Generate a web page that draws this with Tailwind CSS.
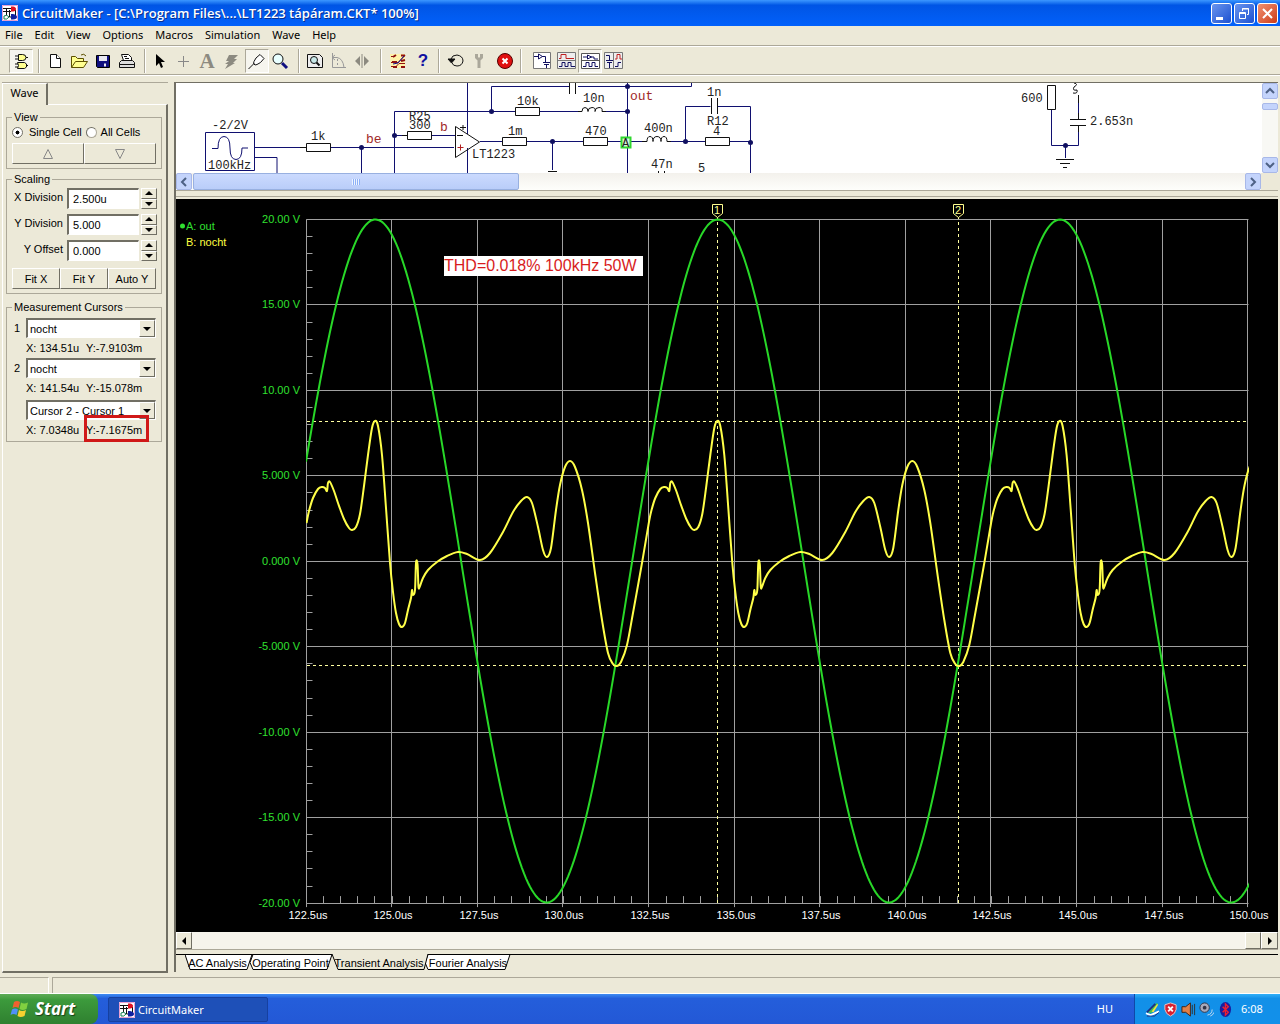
<!DOCTYPE html>
<html lang="hu">
<head>
<meta charset="utf-8">
<title>CircuitMaker</title>
<script src="https://cdn.jsdelivr.net/npm/@tailwindcss/browser@4"></script>
</head>
<body class="flex h-screen flex-col overflow-hidden bg-[#ece9d8] font-['Liberation_Sans',sans-serif] text-[11px] leading-[14px] text-black">
<svg class="hidden">
  <symbol id="logo" viewBox="0 0 16 16">
    <path d="M0 0h16v16H0z" fill="#fff"/><path d="M.5.5h15v15H.5z" fill="none" stroke="#e8a0d0"/>
    <path d="M1 3.500h9M4.500 3v8M1 6.500h8M7.500 5v7h5M13.500 5v6" fill="none" stroke="#111"/>
    <path d="M9 1.500h2q3 .5 3 2.500t-3 2.500H9z" fill="#e01020"/><path d="M9 9h2q4 1 4 3t-4 2.500H9z" fill="#1020a0"/><path d="M2 11q3-2 5 1-2 3-5 2z" fill="#fff" stroke="#108050"/>
  </symbol>
</svg>

<header class="flex h-[26px] shrink-0 items-center bg-linear-to-b from-[#3c97ff] via-[#0055e5] via-20% to-[#0261fb] pl-[2px] pr-[2px] text-white">
  <svg class="size-4"><use href="#logo"/></svg>
  <h1 class="ml-1 grow whitespace-nowrap font-['Open_Sans',sans-serif] text-[13px] font-semibold leading-[18px] text-shadow-[1px_1px_0_#0a3090]">CircuitMaker - [C:\Program Files\...\LT1223 tápáram.CKT* 100%]</h1>
  <div class="flex gap-[2px]">
    <button aria-label="Minimize" class="size-[21px] rounded-[3px] border border-white bg-linear-to-br from-[#6a94ee] to-[#1c4fd0]"><svg viewBox="0 0 19 19"><path d="M4 13h7v3H4z" fill="#fff"/></svg></button>
    <button aria-label="Restore" class="size-[21px] rounded-[3px] border border-white bg-linear-to-br from-[#6a94ee] to-[#1c4fd0]"><svg viewBox="0 0 19 19" fill="none" stroke="#fff"><path d="M7.500 7V4.500h6v6H12M7 5h7"/><path d="M4.500 8.500h6v6h-6zM4 9.500h7"/></svg></button>
    <button aria-label="Close" class="size-[21px] rounded-[3px] border border-white bg-linear-to-br from-[#f09070] to-[#cc3810]"><svg viewBox="0 0 19 19"><path d="M5 5l9 9M14 5l-9 9" stroke="#fff" stroke-width="2"/></svg></button>
  </div>
</header>

<nav class="flex h-[20px] shrink-0 items-center gap-3 border-b border-[#aca899] pb-[2px] pl-[5px] font-['Noto_Sans',sans-serif] text-[11px]">
  <button>File</button><button>Edit</button><button>View</button><button>Options</button><button>Macros</button><button>Simulation</button><button>Wave</button><button>Help</button>
</nav>

<div class="flex h-[29px] shrink-0 items-center border-t border-b border-t-white border-b-[#aca899] pl-[9px]">
  <button aria-label="Parts" class="size-6 border border-[#aca899] border-r-white border-b-white bg-[#f6f5ee]"><svg viewBox="0 0 22 22" fill="#ffff90" stroke="#111"><path d="M8.500 4.500h4q3.500 0 3.500 3t-3.500 3h-4zM7.500 12.500h7l2 1.500v3l-2 1.500h-7q2-3 0-6z"/><path d="M5 6h3M5 9h3M16 7.500h2M5 14h3M5 17h3M16 15.500h2"/></svg></button>
  <i class="mr-[3px] ml-[5px] h-6 w-[2px] border-l border-[#aca899] bg-white"></i>
  <button aria-label="New" class="size-6"><svg viewBox="0 0 24 24" fill="#fff" stroke="#111"><path d="M7.500 5.500h6l4 4v9h-10z"/><path d="M13.500 5.500v4h4"/></svg></button>
  <button aria-label="Open" class="size-6"><svg viewBox="0 0 24 24" fill="#ffff90" stroke="#5c5000"><path d="M4.500 18.500v-11h4l2 2h6v3"/><path d="M4.500 18.500l4-6h12l-4 6z"/><path d="M14 6q3-2 5 1" fill="none"/></svg></button>
  <button aria-label="Save" class="size-6"><svg viewBox="0 0 24 24"><path d="M5.500 6.500h13v12h-12l-1-1z" fill="#101080" stroke="#000"/><path d="M8 7h8v5H8zM13 14.500h2v3h-2z" fill="#e8e8f0"/></svg></button>
  <button aria-label="Print" class="size-6"><svg viewBox="0 0 24 24" fill="#ddd" stroke="#111"><path d="M8.500 11.500l-2-6h7l3 3v3z" fill="#fff"/><path d="M9 7.500h3M10 9.500h4M4.500 13.500l2-2h11l2 2v5h-15zM4 15.500h15"/></svg></button>
  <i class="mr-[3px] ml-[5px] h-6 w-[2px] border-l border-[#aca899] bg-white"></i>
  <button aria-label="Select" class="size-6"><svg viewBox="0 0 24 24"><path d="M7 5v12l3-3 2 5 2-1-2-5h4z"/></svg></button>
  <button aria-label="Wire" class="size-6"><svg viewBox="0 0 24 24"><path d="M5 12.500h11M10.500 7v11" stroke="#888"/></svg></button>
  <button aria-label="Text" class="size-6 pr-1 font-['Liberation_Serif',serif] text-[21px] font-bold leading-6 text-[#8c8a80]">A</button>
  <button aria-label="Delete" class="size-6"><svg viewBox="0 0 24 24"><path d="M8 6h9l-4 4h3l-4 4h2L4 20l3-5H4l4-3H5z" fill="#8c8a80"/></svg></button>
  <button aria-label="Probe" class="size-6 border border-[#aca899] border-r-white border-b-white bg-[#f6f5ee]"><svg viewBox="0 0 22 22" fill="#fff" stroke="#111"><path d="M2.500 19l6-6M8 11.500l2-3.500 4-3.500 4 4-3.500 4-3.500 2-2 .5-1.500-1.500z"/></svg></button>
  <button aria-label="Zoom" class="size-6"><svg viewBox="0 0 24 24"><circle cx="9" cy="10" r="5" fill="#e8ffff" stroke="#111"/><path d="M13 14l5 5" stroke="#101080" stroke-width="3"/></svg></button>
  <i class="mr-[3px] ml-[5px] h-6 w-[2px] border-l border-[#aca899] bg-white"></i>
  <button aria-label="Fit page" class="size-6"><svg viewBox="0 0 24 24" fill="none" stroke="#111"><path d="M4.500 5.500h12l3 3v10h-15z" fill="#eee"/><circle cx="11" cy="11" r="3.500" fill="#c8e8e8"/><path d="M13.500 13.500l3 3" stroke-width="2"/></svg></button>
  <button aria-label="Rotate" class="size-6"><svg viewBox="0 0 24 24" fill="none" stroke="#999"><path d="M5.500 4v14.500H19M5 8.500h5q6 1 7 10M8 6l-3 2.500 3 2.500"/><path d="M10.500 10v8" stroke-dasharray="2 2"/></svg></button>
  <button aria-label="Mirror" class="size-6"><svg viewBox="0 0 24 24"><path d="M9 7v10l-5-5zM13 7v10l5-5z" fill="#8c8a80"/><path d="M11 5v14" stroke="#8c8a80"/></svg></button>
  <i class="mr-[3px] ml-[5px] h-6 w-[2px] border-l border-[#aca899] bg-white"></i>
  <button aria-label="Digital options" class="size-6"><svg viewBox="0 0 24 24" fill="none"><path d="M5 5h15v14H6z" fill="#fff2a8"/><path d="M8 8l3-2M7 13h5M8 18h4M16 6.500h4M16 12l4-1M16 18h4" stroke="#901010" stroke-width="2"/><path d="M6 7.500h4M6 13.500h7l7-7M6 17.500h5l3-3h6" stroke="#901010"/><path d="M8 15l5-1 6-7" stroke="#101090"/></svg></button>
  <button aria-label="Help" class="size-6 pl-1 text-[17px] font-bold leading-6 text-[#1010a0]">?</button>
  <i class="mr-[3px] ml-[5px] h-6 w-[2px] border-l border-[#aca899] bg-white"></i>
  <button aria-label="Reset" class="size-6"><svg viewBox="0 0 24 24" fill="none" stroke="#111"><path d="M8 10q1-4 6-4 6 1 6 6-1 5-6 5-4 0-5-3"/><path d="M5 10h7l-3.500 4z" fill="#111"/></svg></button>
  <button aria-label="Step" class="size-6"><svg viewBox="0 0 24 24"><path d="M9.500 5v3.500l2.500 2.500 2.500-2.500V5M12 11v8" fill="none" stroke="#aaa79a" stroke-width="3"/></svg></button>
  <button aria-label="Stop" class="size-6"><svg viewBox="0 0 24 24"><circle cx="14" cy="12" r="7.500" fill="#e01010" stroke="#500"/><path d="M11.500 9.500l5 5M16.500 9.500l-5 5" stroke="#fff" stroke-width="2"/></svg></button>
  <i class="mr-2 ml-[5px] h-6 w-[2px] border-l border-[#aca899] bg-white"></i>
  <button aria-label="Schematic" class="size-6"><svg viewBox="0 0 24 24" fill="none" stroke="#111060"><path d="M3.500 3.500h17v16h-17z" fill="#fff" stroke="#777"/><path d="M4 7.500h4M8.500 5v5l4-2.500zM12 7.500h3.500V13M13 13.500h7M14 15.500h5M16.500 16v3"/></svg></button>
  <button aria-label="Waveforms" class="size-6"><svg viewBox="0 0 24 24" fill="none" stroke="#111060"><path d="M3.500 3.500h18v16h-18zM4 11.500h17" fill="#eee" stroke="#777"/><path d="M5 9.500h2v-4h5v4h8" stroke="#c02020"/><path d="M5 17.500h3v-4h3v4h3v-4h3v4h4"/></svg></button>
  <button aria-label="Split horizontally" class="size-6 border border-[#aca899] border-r-white border-b-white bg-[#f6f5ee]"><svg viewBox="0 0 22 22" fill="none" stroke="#111060"><path d="M2.500 3.500h18v15h-18zM3 10.500h17" fill="#fff" stroke="#555"/><path d="M4 7h4M8.500 5v4l4-2zM12 7h3v2h4M4 16.500h3v-4h3v4h3v-4h3v4h3"/></svg></button>
  <button aria-label="Split vertically" class="size-6"><svg viewBox="0 0 24 24" fill="none" stroke="#111060"><path d="M2.500 3.500h18v16h-18zM11.500 4v15" fill="#eee" stroke="#777"/><path d="M4 6.500h3.500V11M4 11.500h7M5 13.500h5M7.500 14v5M13 17.500h3v-4h3"/><path d="M13 10h2V5.500h3V10h2" stroke="#c02020"/></svg></button>
</div>

<main class="flex min-h-0 grow border-t border-white">
  <aside class="flex w-[168px] shrink-0 flex-col pt-[6px] pl-[2px]">
    <div class="flex h-[22px] border-t border-[#aca899]">
      <button class="relative z-10 -mb-px w-[46px] border-l border-t border-r-2 border-l-white border-t-white border-r-[#716f64] bg-[#ece9d8] pb-1 font-['Noto_Sans',sans-serif] text-[11px]">Wave</button>
    </div>
    <div class="mb-1 grow border-t border-r-2 border-b-2 border-l border-[#716f64] border-t-white border-l-white pt-[5px] pr-[4px] pl-[3px]">
      <fieldset class="min-w-0 border border-[#aca899] px-[5px] pb-[4px]">
        <legend class="h-[14px] px-[2px]">View</legend>
        <div class="flex h-4 items-center">
          <input id="single" name="cells" type="radio" checked class="size-[11px] shrink-0 appearance-none rounded-full border border-[#716f64] bg-white bg-radial from-black from-25% to-white to-35%">
          <label for="single" class="ml-[6px] whitespace-nowrap">Single Cell</label>
          <input id="all" name="cells" type="radio" class="ml-1 size-[11px] shrink-0 appearance-none rounded-full border border-[#aca899] border-t-[#716f64] border-l-[#716f64] bg-white">
          <label for="all" class="ml-1 whitespace-nowrap">All Cells</label>
        </div>
        <div class="mt-[3px] grid h-[21px] grid-cols-2">
          <button aria-label="Up" class="flex items-center justify-center border border-r-[#716f64] border-b-[#716f64] border-white"><svg class="size-3" viewBox="0 0 12 12"><path d="M6 1.500L10.500 10.500h-9z" fill="none" stroke="#888"/></svg></button>
          <button aria-label="Down" class="flex items-center justify-center border border-r-[#716f64] border-b-[#716f64] border-white"><svg class="size-3" viewBox="0 0 12 12"><path d="M6 10.500L10.500 1.500h-9z" fill="none" stroke="#888"/></svg></button>
        </div>
      </fieldset>
      <fieldset class="mt-[3px] min-w-0 border border-[#aca899] px-[5px] pt-[2px] pb-[4px]">
        <legend class="h-[14px] px-[2px]">Scaling</legend>
        <div class="grid gap-[5px]">
          <div class="flex h-[21px]"><label for="xd" class="w-[51px] whitespace-nowrap pt-[2px] text-right">X Division</label><input id="xd" value="2.500u" class="ml-1 w-[72px] border border-t-2 border-l-2 border-white border-t-[#716f64] border-l-[#716f64] bg-white pl-1"><span class="ml-[2px] grid w-[16px] grid-rows-2"><button aria-label="Increase" class="flex items-center justify-center border border-white border-r-[#716f64] border-b-[#716f64]"><svg class="h-1 w-2" viewBox="0 0 8 4"><path d="M0 4l4-4 4 4z"/></svg></button><button aria-label="Decrease" class="flex items-center justify-center border border-white border-r-[#716f64] border-b-[#716f64]"><svg class="h-1 w-2" viewBox="0 0 8 4"><path d="M0 0l4 4 4-4z"/></svg></button></span></div>
          <div class="flex h-[21px]"><label for="yd" class="w-[51px] whitespace-nowrap pt-[2px] text-right">Y Division</label><input id="yd" value="5.000" class="ml-1 w-[72px] border border-t-2 border-l-2 border-white border-t-[#716f64] border-l-[#716f64] bg-white pl-1"><span class="ml-[2px] grid w-[16px] grid-rows-2"><button aria-label="Increase" class="flex items-center justify-center border border-white border-r-[#716f64] border-b-[#716f64]"><svg class="h-1 w-2" viewBox="0 0 8 4"><path d="M0 4l4-4 4 4z"/></svg></button><button aria-label="Decrease" class="flex items-center justify-center border border-white border-r-[#716f64] border-b-[#716f64]"><svg class="h-1 w-2" viewBox="0 0 8 4"><path d="M0 0l4 4 4-4z"/></svg></button></span></div>
          <div class="flex h-[21px]"><label for="yo" class="w-[51px] whitespace-nowrap pt-[2px] text-right">Y Offset</label><input id="yo" value="0.000" class="ml-1 w-[72px] border border-t-2 border-l-2 border-white border-t-[#716f64] border-l-[#716f64] bg-white pl-1"><span class="ml-[2px] grid w-[16px] grid-rows-2"><button aria-label="Increase" class="flex items-center justify-center border border-white border-r-[#716f64] border-b-[#716f64]"><svg class="h-1 w-2" viewBox="0 0 8 4"><path d="M0 4l4-4 4 4z"/></svg></button><button aria-label="Decrease" class="flex items-center justify-center border border-white border-r-[#716f64] border-b-[#716f64]"><svg class="h-1 w-2" viewBox="0 0 8 4"><path d="M0 0l4 4 4-4z"/></svg></button></span></div>
        </div>
        <div class="mt-[7px] grid h-[21px] grid-cols-3">
          <button class="border border-white border-r-[#716f64] border-b-[#716f64]">Fit X</button><button class="border border-white border-r-[#716f64] border-b-[#716f64]">Fit Y</button><button class="border border-white border-r-[#716f64] border-b-[#716f64]">Auto Y</button>
        </div>
      </fieldset>
      <fieldset class="mt-[6px] min-w-0 border border-[#aca899] px-[5px] pt-1 pb-[4px]">
        <legend class="h-[14px] px-[2px]">Measurement Cursors</legend>
        <div class="flex h-5"><label for="c1" class="w-[14px] pt-[3px] pl-[2px]">1</label><div class="relative grow"><select id="c1" class="h-5 w-full appearance-none border border-t-2 border-l-2 border-white border-t-[#716f64] border-l-[#716f64] bg-white pl-[2px]"><option>nocht</option></select><span class="pointer-events-none absolute top-[2px] right-px flex h-[17px] w-[16px] items-center justify-center border border-white border-r-[#716f64] border-b-[#716f64] bg-[#ece9d8]"><svg class="h-1 w-2" viewBox="0 0 8 4"><path d="M0 0l4 4 4-4z"/></svg></span></div></div>
        <p class="mt-[3px] flex h-[14px] pl-[14px] whitespace-nowrap"><span class="w-[60px]">X: 134.51u</span><span>Y:-7.9103m</span></p>
        <div class="mt-[3px] flex h-5"><label for="c2" class="w-[14px] pt-[3px] pl-[2px]">2</label><div class="relative grow"><select id="c2" class="h-5 w-full appearance-none border border-t-2 border-l-2 border-white border-t-[#716f64] border-l-[#716f64] bg-white pl-[2px]"><option>nocht</option></select><span class="pointer-events-none absolute top-[2px] right-px flex h-[17px] w-[16px] items-center justify-center border border-white border-r-[#716f64] border-b-[#716f64] bg-[#ece9d8]"><svg class="h-1 w-2" viewBox="0 0 8 4"><path d="M0 0l4 4 4-4z"/></svg></span></div></div>
        <p class="mt-[3px] flex h-[14px] pl-[14px] whitespace-nowrap"><span class="w-[60px]">X: 141.54u</span><span>Y:-15.078m</span></p>
        <div class="mt-[5px] flex h-5 pl-[14px]"><div class="relative grow"><select aria-label="Difference" class="h-5 w-full appearance-none border border-t-2 border-l-2 border-white border-t-[#716f64] border-l-[#716f64] bg-white pl-[2px]"><option>Cursor 2 - Cursor 1</option></select><span class="pointer-events-none absolute top-[2px] right-px flex h-[17px] w-[16px] items-center justify-center border border-white border-r-[#716f64] border-b-[#716f64] bg-[#ece9d8]"><svg class="h-1 w-2" viewBox="0 0 8 4"><path d="M0 0l4 4 4-4z"/></svg></span></div></div>
        <p class="mt-[3px] flex h-[14px] pl-[14px] whitespace-nowrap"><span class="w-[60px]">X: 7.0348u</span><span class="relative">Y:-7.1675m<i class="absolute -top-[8px] -right-[7px] -bottom-[5px] -left-[2px] border-3 border-[#d01818]"></i></span></p>
      </fieldset>
    </div>
  </aside>

  <section class="mt-[6px] mr-[2px] mb-[5px] ml-[6px] flex min-w-0 grow flex-col border-t border-l-2 border-[#716f64]">
    <div class="flex h-[90px] shrink-0 bg-white">
      <svg class="h-full min-w-0 grow font-['Liberation_Mono',monospace] text-[12px]" viewBox="176 83 1086 90" preserveAspectRatio="xMinYMin slice" fill="none" stroke="#101070">
        <path d="M254 147.500h54M330 147.500h124M254 157.500h23V173M361.500 147v26M394.500 173v-61.500h121M394.500 135.500h14M431 135.500h24M467.500 83v51M467.500 148v25M491.500 111V86.500h78M578 86.500h113.500V83M539 111.500h43M606 111.500h22M627.500 83v90M480 141.500h22M525 141.500h58M607 141.500h37M552.500 141v29M670 141.500h36M729 141.500h22M685.500 141v-34.500h25M717 106.500h33.500V173M1051.500 109v36.500h27V130M1065.500 145v13M1078.500 102v16"/>
        <path d="M205.500 132.500h49v38h-49z"/>
        <path d="M212 148.500h6q0-12 6-12t6 11.500 6 11.500 6-11.500h6"/>
        <g stroke="#111"><path d="M306.500 143.500h24v8h-24zM407.500 131.500h24v8h-24zM502.500 137.500h24v8h-24zM515.500 107.500h24v8h-24zM583.500 137.500h24v8h-24zM705.500 137.500h24v8h-24zM1047.500 85.500h8v24h-8z" fill="#fff"/>
        <path d="M300 147.500h6M402 135.500h5M455.500 126.500v31l24-15.500zM463 125v5M460 127.500h6M457 135.500h6M569.500 83v11M575.500 83v11M548 171.500h9M578 111.500h4q0-4 3-4t3 4q0-4 4-4t3 4q0-4 4-4t3 4h4M642 141.500h5q0-5 3-5t3 5q0-5 4-5t4 5q0-5 3-5t3 5h4M711.500 98v16M717.500 98v16M658.500 171v2M664.500 171v2M1070 119.500h16M1070 125.500h16M1078.500 113v6M1078.500 126v6M1074 83q5 1 0 4-2 4 3 3 1 4-4 3M1078.500 95v8M1056 159.500h18M1060 163.500h10M1063 167.500h4"/></g>
        <path d="M457.500 147.500h6M460.500 144.500v6" stroke="#b02020"/>
        <path d="M621.500 137.500h9v10h-9z" fill="#d8f8d8" stroke="#30d830" stroke-width="2"/>
        <g fill="#101060" stroke="none"><circle cx="361.500" cy="147.500" r="2.500"/><circle cx="394.500" cy="135.500" r="2.500"/><circle cx="491.500" cy="111.500" r="2.500"/><circle cx="627.500" cy="86.500" r="2.500"/><circle cx="627.500" cy="111.500" r="2.500"/><circle cx="552.500" cy="141.500" r="2.500"/><circle cx="685.500" cy="141.500" r="2.500"/><circle cx="750.500" cy="142.500" r="2.500"/><circle cx="1065.500" cy="145.500" r="2.500"/></g>
        <g fill="#222" stroke="none"><text x="212" y="129">-2/2V</text><text x="208" y="169">100kHz</text><text x="311" y="140">1k</text><text x="409" y="120">R25</text><text x="409" y="129">300</text><text x="472" y="158">LT1223</text><text x="508" y="135">1m</text><text x="517" y="105">10k</text><text x="583" y="102">10n</text><text x="585" y="135">470</text><text x="644" y="132">400n</text><text x="707" y="96">1n</text><text x="707" y="125">R12</text><text x="713" y="135">4</text><text x="651" y="168">47n</text><text x="698" y="172">5</text><text x="1021" y="102">600</text><text x="1090" y="125">2.653n</text><text x="622" y="147">A</text></g>
        <g fill="#a02828" stroke="none" class="text-[13px]"><text x="366" y="143">be</text><text x="440" y="131">b</text><text x="630" y="100">out</text></g>
      </svg>
      <div class="flex w-4 shrink-0 flex-col bg-[#f8f8f4]">
        <button aria-label="Scroll up" class="h-4 rounded-xs border border-[#a8b8e8] bg-[#c4d4fc]"><svg viewBox="0 0 14 14"><path d="M3 9l4-4 4 4" fill="none" stroke="#4d6185" stroke-width="2"/></svg></button>
        <span class="mt-[4px] h-[7px] rounded-xs border border-[#a8b8e8] bg-[#c4d4fc]"></span>
        <button aria-label="Scroll down" class="mt-auto h-4 rounded-xs border border-[#a8b8e8] bg-[#c4d4fc]"><svg viewBox="0 0 14 14"><path d="M3 5l4 4 4-4" fill="none" stroke="#4d6185" stroke-width="2"/></svg></button>
      </div>
    </div>
    <div class="flex h-[17px] shrink-0 bg-[#ece9d8] pr-[17px]">
      <div class="flex grow bg-linear-to-b from-[#f3f1ec] to-[#fefefb]">
        <button aria-label="Scroll left" class="w-4 rounded-xs border border-[#a8b8e8] bg-[#c4d4fc]"><svg viewBox="0 0 14 14"><path d="M9 3L5 7l4 4" fill="none" stroke="#4d6185" stroke-width="2"/></svg></button>
        <span class="ml-px flex w-[30%] items-center justify-center rounded-xs border border-[#98b0e0] bg-linear-to-b from-[#cbdafe] to-[#b9cdf9]"><i class="h-[6px] w-2 bg-[repeating-linear-gradient(90deg,#eef4fe_0_1px,#8cb0f8_1px_2px)]"></i></span>
        <button aria-label="Scroll right" class="ml-auto w-4 rounded-xs border border-[#a8b8e8] bg-[#c4d4fc]"><svg viewBox="0 0 14 14"><path d="M5 3l4 4-4 4" fill="none" stroke="#4d6185" stroke-width="2"/></svg></button>
      </div>
    </div>
    <div class="flex h-[9px] shrink-0 flex-col justify-between border-t border-[#aca899] pb-[2px]"><i></i><i class="h-px bg-[#aca899]"></i></div>

    <div class="min-h-0 grow bg-black">
      <svg id="plot" class="size-full text-[11px]" viewBox="176 199 1102 733" preserveAspectRatio="xMidYMin meet" fill="none">
        <defs><clipPath id="area"><path d="M306 215h943v693H306z"/></clipPath></defs>
        <g id="grid" stroke="#a0a0a0"></g>
        <g stroke="#ffffa0" stroke-dasharray="3 3"><path d="M307 421.500h941M307 665.500h941M717.500 216v687M958.500 216v687"/></g>
        <g clip-path="url(#area)" stroke-width="2">
          <path id="out" stroke="#28d828"/>
          <path id="nocht" stroke="#ffff48"/>
        </g>
        <g stroke="#ffff90"><path d="M712.500 204.500h10v9l-5 4-5-4zM953.500 204.500h10v9l-5 4-5-4z" fill="#000"/></g>
        <g fill="#ffff90" text-anchor="middle"><text x="717" y="214">1</text><text x="958" y="214">2</text></g>
        <circle cx="182.500" cy="226" r="2.500" fill="#30e030"/>
        <text x="186" y="230" fill="#30e030">A: out</text><text x="186" y="246" fill="#ffff40">B: nocht</text>
        <path d="M444 256h199v20H444z" fill="#fff"/><text x="444" y="271" fill="#d81c1c" class="text-[16px]">THD=0.018% 100kHz 50W</text>
        <g id="ylabels" fill="#30e030" text-anchor="end"></g>
        <g id="xlabels" fill="#fff" text-anchor="middle"></g>
      </svg>
    </div>
    <div class="flex h-[18px] shrink-0 border-b border-[#aca899] bg-[#f6f4ec]">
      <button aria-label="Scroll left" class="flex w-4 items-center justify-center border border-white border-r-[#716f64] border-b-[#716f64] bg-[#ece9d8]"><svg class="h-2 w-1" viewBox="0 0 4 8"><path d="M4 0L0 4l4 4z"/></svg></button>
      <span class="ml-auto w-4 border border-white border-r-[#716f64] border-b-[#716f64] bg-[#ece9d8]"></span>
      <button aria-label="Scroll right" class="flex w-[17px] items-center justify-center border border-white border-r-[#716f64] border-b-[#716f64] bg-[#ece9d8]"><svg class="h-2 w-1" viewBox="0 0 4 8"><path d="M0 0l4 4-4 4z"/></svg></button>
    </div>
    <div class="relative mt-1 flex h-[18px] shrink-0 border-t border-black pl-[9px]">
      <svg class="absolute -top-px left-[9px] h-[17px] w-[327px]" viewBox="0 0 327 17" stroke="#000"><path d="M0 .5l5 15h57l5-15zM68 .5l-3 8 3 7h74l5-15zM243 .5l-3 8 3 7h77l5-15z" fill="#fff"/><path d="M147 0l6 15.500h86l4-15.500" fill="#ece9d8"/><path d="M148 .5h94" stroke="#ece9d8"/></svg>
      <button class="relative h-4 w-[65px] whitespace-nowrap">AC Analysis</button><button class="relative h-4 w-[81px] whitespace-nowrap">Operating Point</button><button class="relative h-4 w-[96px] whitespace-nowrap">Transient Analysis</button><button class="relative h-4 w-[82px] whitespace-nowrap">Fourier Analysis</button>
    </div>
  </section>
</main>

<div class="flex h-[17px] shrink-0 gap-[3px] border-b border-white"><span class="w-[49px] border-t border-r border-[#aca899] border-r-white"></span><span class="grow border-t border-l border-[#aca899]"></span></div>

<footer class="flex h-[30px] shrink-0 bg-linear-to-b from-[#3f8cf3] via-[#245edb] via-15% to-[#2358d6] font-['Noto_Sans',sans-serif] text-[11px] text-white">
  <button class="flex w-[98px] items-center rounded-r-lg bg-linear-to-b from-[#5eac56] via-[#3c9a3c] via-20% to-[#2f8030] pl-[10px] font-['Open_Sans',sans-serif] text-[17px] font-bold italic leading-6 text-shadow-[1px_1px_1px_#184018]">
    <svg class="mr-[5px] size-5" viewBox="0 0 20 20"><path d="M4 3q3-2 6 0L8.500 9q-3-2-6 0z" fill="#f06030"/><path d="M11 3.500q3 2 7 0L16.500 10q-4 2-7 0z" fill="#80d040"/><path d="M2 10.500q3-2 6 0L6.500 16q-3-2-6 0z" fill="#5090f8"/><path d="M9 11q3 2 7 0l-1.500 6q-4 2-7 0z" fill="#f8d030"/></svg>Start</button>
  <button class="mt-[3px] mb-[2px] ml-[10px] flex w-[160px] items-center gap-[3px] rounded-xs border border-[#1640a0] bg-[#1e50b8] pl-[10px]"><svg class="size-4"><use href="#logo"/></svg>CircuitMaker</button>
  <span class="ml-auto self-center pr-[21px]">HU</span>
  <div class="flex w-[146px] items-center gap-[3px] border-l border-[#1048a8] bg-linear-to-b from-[#30b0f8] via-[#1290e8] via-15% to-[#1290ea] pl-[10px]">
    <svg class="size-[15px]" viewBox="0 0 16 16"><path d="M3 11l9-10 2 1-7 10z" fill="#40c050"/><path d="M7 10l6-8 1 1-5 8z" fill="#f8e040"/><path d="M2 11l9-9" stroke="#203080" stroke-width="2"/><path d="M1 12l5 2 9-4" fill="none" stroke="#fff" stroke-width="2"/><path d="M2 15h8l5-4" fill="none" stroke="#203080"/></svg>
    <svg class="size-[15px]" viewBox="0 0 16 16"><path d="M8 1l6 2v5q-1 5-6 7-5-2-6-7V3z" fill="#d82030" stroke="#e8c8c8"/><path d="M5.500 5l5 5M10.500 5l-5 5" stroke="#fff" stroke-width="2"/></svg>
    <svg class="size-[15px]" viewBox="0 0 16 16"><path d="M1 5h4l5-4v14l-5-4H1z" fill="#e08048" stroke="#402010"/><path d="M12 3v10M14.500 2v12" stroke="#303030"/></svg>
    <svg class="size-[15px]" viewBox="0 0 16 16"><circle cx="6" cy="6" r="5" fill="#aab" stroke="#334"/><circle cx="6" cy="6" r="2" fill="#334"/><path d="M9 14q5-1 5-6M12 15q3-1 4-4" fill="none" stroke="#cde"/></svg>
    <svg class="size-[15px]" viewBox="0 0 16 16"><ellipse cx="9" cy="8" rx="6" ry="8" fill="#1820a0"/><path d="M6 5l6 6-3 3V2l3 3-6 6" fill="none" stroke="#f02030" stroke-width="1.500"/></svg>
    <time class="ml-[6px]">6:08</time>
  </div>
</footer>

<script>
const get = id => document.getElementById(id);
const left = 306.5, right = 1248.5, top0 = 219.5, step = 85.6, rowStep = 85.45;
const bottom = top0 + 8 * rowStep;
let grid = '';
for (let i = 0; i <= 11; i++) {
  const x = Math.floor(left + i * step - .5) + .5;
  grid += `M${x} ${top0}V${bottom + 4}`;
}
for (let i = 0; i <= 8; i++) {
  const y = Math.floor(top0 + i * rowStep) + .5;
  grid += `M${left} ${y}H${right}`;
}
for (let i = 0; i < 55; i++) { const x = Math.floor(left + i * step / 5) + .5; grid += `M${x} ${bottom}v-7`; }
for (let i = 0; i < 40; i++) { const y = Math.floor(top0 + i * rowStep / 5) + .5; grid += `M${left} ${y}h6`; }
get('grid').innerHTML = `<path d="${grid}"/>`;
get('ylabels').innerHTML = ['20.00', '15.00', '10.00', '5.000', '0.000', '-5.000', '-10.00', '-15.00', '-20.00']
  .map((t, i) => `<text x="300" y="${Math.round(223 + i * rowStep)}">${t} V</text>`).join('');
let xs = '';
for (let i = 0; i <= 11; i++) xs += `<text x="${Math.round(307.5 + i * step)}" y="919">${(122.5 + i * 2.5).toFixed(1)}us</text>`;
get('xlabels').innerHTML = xs;

const period = 342.3;
let sine = '';
for (let x = 306; x <= 1250; x += 2) sine += (sine ? 'L' : 'M') + x + ' ' + (561 - 341.5 * Math.cos((x - 375.5) / period * 2 * Math.PI)).toFixed(1);
get('out').setAttribute('d', sine);

const wave = [[306.5,523],[309,511],[313,498],[318,489],[322,487],[325,488],[327,491],[328,483],[330,482],[334,491],[338,503],[344,519],[349,528],[352,530],[356,527],[360,514],[364,486],[368,455],[372,428],[375,421],[378,426],[382,455],[386,508],[390,563],[393,592],[396,613],[399,624],[402,627],[405,623],[408,610],[411,598],[412,590],[413,595],[415,590],[416,563],[417.5,564],[418.5,587],[420,586],[423,578],[428,570],[437,562],[447,556],[458,552],[467,554],[480,560],[490,553],[503,532],[513,512],[521,501],[527,497],[532,503],[538,527],[543,550],[547,557],[551,548],[556,510],[560,485],[565,467],[570,461],[575,467],[582,490],[588,523],[595,573],[602,620],[608,653],[613,664],[617,666],[621,662],[627,645],[633,613],[642,563]];
const pts = [0, 1, 2].flatMap(n => wave.map(([x, y]) => [x + n * period, y]));
let d = `M${pts[0]}`;
for (let i = 0; i < pts.length - 1; i++) {
  const a = pts[Math.max(i - 1, 0)], b = pts[i], c = pts[i + 1], e = pts[Math.min(i + 2, pts.length - 1)];
  d += `C${b[0] + (c[0] - a[0]) / 6} ${b[1] + (c[1] - a[1]) / 6} ${c[0] - (e[0] - b[0]) / 6} ${c[1] - (e[1] - b[1]) / 6} ${c[0]} ${c[1]}`;
}
get('nocht').setAttribute('d', d);
</script>
</body>
</html>
